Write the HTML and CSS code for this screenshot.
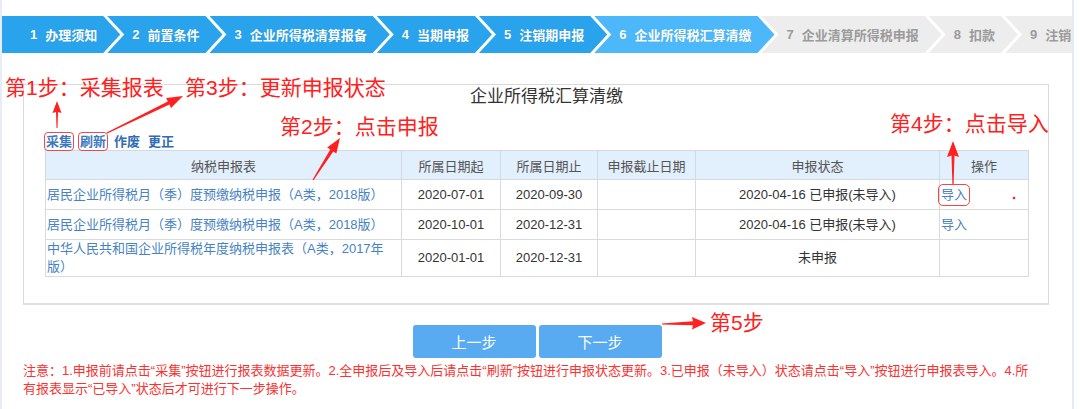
FILE: index.html
```html
<!DOCTYPE html>
<html lang="zh-CN">
<head>
<meta charset="utf-8">
<title>企业所得税汇算清缴</title>
<link rel="stylesheet" href="styles.css">
</head>
<body>
<div class="page">
  <ol class="steps">
    <li class="step done"><span class="num">1</span>办理须知</li>
    <li class="step done"><span class="num">2</span>前置条件</li>
    <li class="step done"><span class="num">3</span>企业所得税清算报备</li>
    <li class="step done"><span class="num">4</span>当期申报</li>
    <li class="step done"><span class="num">5</span>注销期申报</li>
    <li class="step current"><span class="num">6</span>企业所得税汇算清缴</li>
    <li class="step todo"><span class="num">7</span>企业清算所得税申报</li>
    <li class="step todo"><span class="num">8</span>扣款</li>
    <li class="step todo last"><span class="num">9</span>注销</li>
  </ol>

  <section class="panel">
    <h2 class="panel-title">企业所得税汇算清缴</h2>
    <div class="toolbar">
      <a class="tool marked">采集</a><a class="tool marked">刷新</a><a class="tool">作废</a><a class="tool">更正</a>
    </div>
    <table class="grid">
      <colgroup>
        <col class="c-name"><col class="c-date"><col class="c-date2"><col class="c-dead"><col class="c-status"><col class="c-op">
      </colgroup>
      <thead>
        <tr><th>纳税申报表</th><th>所属日期起</th><th>所属日期止</th><th>申报截止日期</th><th>申报状态</th><th>操作</th></tr>
      </thead>
      <tbody>
        <tr>
          <td class="name"><a>居民企业所得税月（季）度预缴纳税申报（A类，2018版）</a></td>
          <td class="mid">2020-07-01</td><td class="mid">2020-09-30</td><td></td>
          <td class="mid">2020-04-16 已申报(未导入)</td>
          <td class="op"><a class="imp marked">导入</a></td>
        </tr>
        <tr>
          <td class="name"><a>居民企业所得税月（季）度预缴纳税申报（A类，2018版）</a></td>
          <td class="mid">2020-10-01</td><td class="mid">2020-12-31</td><td></td>
          <td class="mid">2020-04-16 已申报(未导入)</td>
          <td class="op"><a class="imp">导入</a></td>
        </tr>
        <tr class="tall">
          <td class="name"><a>中华人民共和国企业所得税年度纳税申报表（A类，2017年版）</a></td>
          <td class="mid">2020-01-01</td><td class="mid">2020-12-31</td><td></td>
          <td class="mid">未申报</td>
          <td class="op"></td>
        </tr>
      </tbody>
    </table>
  </section>

  <div class="actions">
    <button class="btn" type="button">上一步</button>
    <button class="btn" type="button">下一步</button>
  </div>

  <p class="note">注意：1.申报前请点击“采集”按钮进行报表数据更新。2.全申报后及导入后请点击“刷新”按钮进行申报状态更新。3.已申报（未导入）状态请点击“导入”按钮进行申报表导入。4.所<br>有报表显示“已导入”状态后才可进行下一步操作。</p>
</div>

<div class="annotations">
  <span class="label l1">第1步：采集报表</span>
  <span class="label l3">第3步：更新申报状态</span>
  <span class="label l2">第2步：点击申报</span>
  <span class="label l4">第4步：点击导入</span>
  <span class="label l5">第5步</span>
  <svg class="arrows" width="1080" height="409" viewBox="0 0 1080 409">
    <polygon points="57,101 61.5,113 58,112 57.5,128 56.5,128 56,112 52.5,113"/>
    <polygon points="183,96 171,107.9 169.4,104.6 107.3,133.5 106.7,132.5 167.8,101.4 166.2,98.1"/>
    <polygon points="340,138 336.3,153.5 333.25,151.5 313.5,180.3 312.5,179.7 330.25,149.5 327.2,147.5"/>
    <polygon points="953,141 959,157 954.5,155.5 953.6,184 952.4,184 951.5,155.5 947,157"/>
    <polygon points="706,323 692,329.5 693,325.3 662,324.6 662,323.6 693,321.3 692,317"/>
    <circle cx="1014" cy="198" r="1.3"/>
  </svg>
</div>
</body>
</html>
```

FILE: styles.css
```css
html, body {
  margin: 0;
  padding: 0;
  background: #fff;
}

body {
  position: relative;
  width: 1080px;
  height: 409px;
  overflow: hidden;
  font-family: "Liberation Sans", "Noto Sans CJK SC", sans-serif;
  font-size: 13px;
  color: #333;
}

.page {
  width: 1074px;
  height: 409px;
  box-sizing: border-box;
  border-left: 2px solid #e6edf5;
  border-right: 2px solid #e3ecf7;
  padding-top: 16px;
  overflow: hidden;
}

/* ---------- step bar ---------- */
.steps {
  list-style: none;
  margin: 0;
  padding: 0;
  display: flex;
  height: 37px;
  overflow: hidden;
}

.step {
  flex: none;
  display: flex;
  align-items: center;
  height: 37px;
  padding: 0 23px 0 25px;
  margin-left: -13px;
  font-size: 13px;
  font-weight: bold;
  white-space: nowrap;
  clip-path: polygon(0 0, calc(100% - 17px) 0, 100% 50%, calc(100% - 17px) 100%, 0 100%, 17px 50%);
}

.step:first-child {
  margin-left: 0;
  padding-left: 28px;
  clip-path: polygon(0 0, calc(100% - 17px) 0, 100% 50%, calc(100% - 17px) 100%, 0 100%);
}

.step.last {
  flex: 1;
  clip-path: polygon(0 0, 100% 0, 100% 100%, 0 100%, 17px 50%);
}

.step .num {
  margin-right: 8px;
}

.step.done {
  background: #29a4ec;
  color: #fff;
  text-shadow: 0 0 1px rgba(0, 0, 0, 0.18);
}

.step.current {
  background: #4cb8f9;
  color: #fff;
  text-shadow: 0 0 1px rgba(0, 0, 0, 0.15);
}

.step.todo {
  background: #ededed;
  color: #9b9b9b;
}

/* ---------- panel ---------- */
.panel {
  margin: 31px 0 0 21px;
  width: 1026px;
  box-sizing: border-box;
  border: 1px solid #dadada;
  border-bottom: 2px solid #e0e0e0;
  padding: 0 20px 26px 21px;
}

.panel-title {
  margin: 0;
  padding-left: 20px;
  font-size: 17px;
  font-weight: normal;
  line-height: 24px;
  text-align: center;
  color: #333;
}

.toolbar {
  margin-top: 24px;
  height: 17px;
  line-height: 17px;
  display: flex;
  align-items: center;
  padding-left: 1px;
}

.tool {
  display: inline-block;
  line-height: 15px;
  margin-right: 8px;
  font-size: 13px;
  font-weight: bold;
  color: #2f6db3;
}

.marked {
  outline: 1px solid #f0484a;
  outline-offset: 1px;
  border-radius: 2px;
}

.toolbar .marked {
  color: #3b78c0;
}

/* ---------- table ---------- */
.grid {
  width: 983px;
  border-collapse: collapse;
  table-layout: fixed;
  border: 1px solid #d6d6d6;
}

.c-name { width: 356px; }
.c-date { width: 99px; }
.c-date2 { width: 97px; }
.c-dead { width: 98px; }
.c-status { width: 244px; }
.c-op { width: 89px; }

.grid th {
  height: 28px;
  padding: 0;
  background: #e2effc;
  border: 1px solid #d4d9de;
  font-weight: normal;
  font-size: 13px;
  color: #555;
  text-align: center;
}

.grid td {
  height: 29px;
  padding: 0 1px;
  border: 1px solid #dadada;
  line-height: 18px;
  font-size: 13px;
  color: #333;
}

.grid td.mid {
  text-align: center;
}

.grid td.name a,
.grid td.op a {
  color: #4682c4;
}

.grid .imp {
  display: inline-block;
  line-height: 16px;
}

.grid .imp.marked {
  outline-offset: 2px;
}

/* ---------- actions ---------- */
.actions {
  display: flex;
  justify-content: center;
  gap: 3px;
  margin-top: 20px;
}

.btn {
  width: 123px;
  height: 33px;
  border: 0;
  border-radius: 3px;
  background: #58abf0;
  color: #fff;
  font-family: "Liberation Sans", "Noto Sans CJK SC", sans-serif;
  font-size: 15px;
  padding: 0;
}

.note {
  margin: 4px 0 0;
  padding-left: 21px;
  font-size: 13px;
  line-height: 18px;
  color: #fa3232;
  white-space: nowrap;
}

/* ---------- annotation overlay ---------- */
.annotations {
  position: absolute;
  left: 0;
  top: 0;
  width: 1080px;
  height: 409px;
  pointer-events: none;
}

.label {
  position: absolute;
  font-size: 21px;
  line-height: 24px;
  color: #ff2020;
  white-space: nowrap;
}

.l1 { left: 5px; top: 76px; }
.l3 { left: 185px; top: 76px; }
.l2 { left: 280px; top: 115px; }
.l4 { left: 890px; top: 112px; }
.l5 { left: 710px; top: 311px; }

.arrows {
  position: absolute;
  left: 0;
  top: 0;
  fill: #ff2020;
}
```
